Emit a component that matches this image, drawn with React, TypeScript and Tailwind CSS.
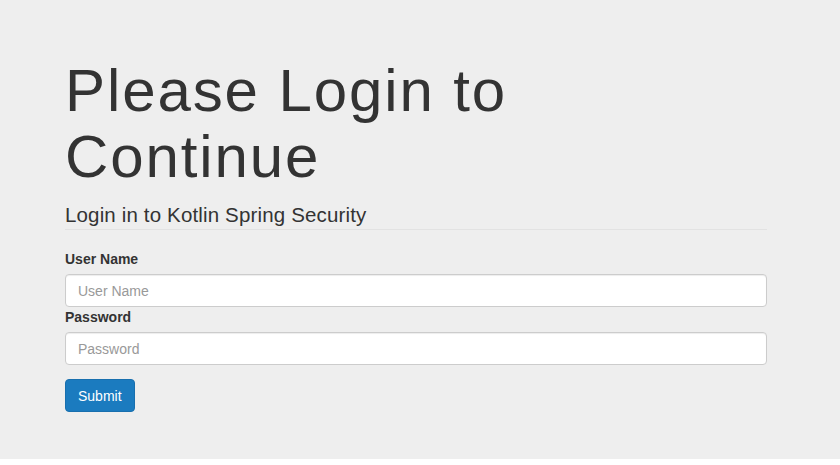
import React from "react";

export default function App() {
  return (
    <div className="min-h-[465px] bg-white font-['Liberation_Sans',Arial,sans-serif] text-[#333333]">
      <div className="bg-[#eeeeee] pt-[58px] pb-[47px]">
        <div className="ml-[65px] w-[702px]">
          <h1 className="max-w-[500px] text-[60px] leading-[66px] font-normal tracking-[1.9px]">
            Please Login to Continue
          </h1>
          <form className="mt-[11px]" onSubmit={(e) => e.preventDefault()}>
            <div className="border-b border-[#e2e2e2] text-[20.5px] leading-[28px] tracking-[0.15px]">
              Login in to Kotlin Spring Security
            </div>
            <label htmlFor="username" className="mt-[19px] block text-[14px] leading-[20px] font-bold">
              User Name
            </label>
            <input
              id="username"
              type="text"
              placeholder="User Name"
              className="mt-[5px] block h-[33px] w-full rounded-[4px] border border-[#cccccc] bg-white px-[12px] text-[14px] text-[#555555] shadow-[inset_0_1px_1px_rgba(0,0,0,0.075)] outline-none placeholder:text-[#999999]"
            />
            <label htmlFor="password" className="block text-[14px] leading-[20px] font-bold">
              Password
            </label>
            <input
              id="password"
              type="password"
              placeholder="Password"
              className="mt-[5px] block h-[33px] w-full rounded-[4px] border border-[#cccccc] bg-white px-[12px] text-[14px] text-[#555555] shadow-[inset_0_1px_1px_rgba(0,0,0,0.075)] outline-none placeholder:text-[#999999]"
            />
            <button
              type="submit"
              className="mt-[14px] h-[33px] rounded-[4px] border border-[#186fae] bg-[#1b7bbf] px-[12px] text-[14px] leading-[20px] text-white"
            >
              Submit
            </button>
          </form>
        </div>
      </div>
    </div>
  );
}
